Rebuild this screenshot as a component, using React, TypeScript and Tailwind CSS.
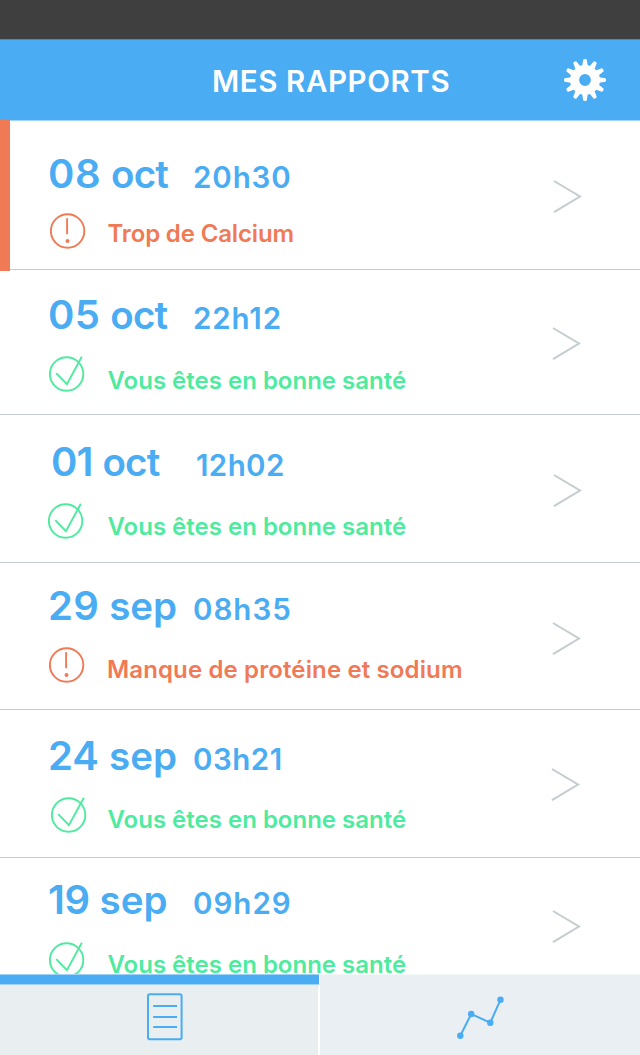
type Report = {
  day: string;
  month: string;
  time: string;
  message: string;
  alert: boolean;
  row: string;
  dateLine: string;
  dayText: string;
  monthText: string;
  timeText: string;
  statusLine: string;
  messageText: string;
  chevron: string;
};

const reports: Report[] = [
  {
    day: "08", month: "oct", time: "20h30", message: "Trop de Calcium", alert: true,
    row: "h-[149px] pt-[33px]", dateLine: "pl-[48px]", dayText: "tracking-[0.5px]", monthText: "tracking-[-0.8px]", timeText: "tracking-[0.9px]",
    statusLine: "mt-[18.5px] pl-[49.5px]", messageText: "ml-[22px] mt-[9px] tracking-[-0.15px]", chevron: "mt-[26px] mr-[58px]",
  },
  {
    day: "05", month: "oct", time: "22h12", message: "Vous êtes en bonne santé", alert: false,
    row: "h-[145px] pt-[25px]", dateLine: "pl-[48px]", dayText: "tracking-[0.3px]", monthText: "tracking-[-0.8px]", timeText: "tracking-[0.9px]",
    statusLine: "mt-[20.5px] pl-[48.5px]", messageText: "ml-[23px] mt-[13px] tracking-[0px]", chevron: "mt-[32px] mr-[59px]",
  },
  {
    day: "01", month: "oct", time: "12h02", message: "Vous êtes en bonne santé", alert: false,
    row: "h-[148px] pt-[27px]", dateLine: "pl-[51px]", dayText: "tracking-[-1px]", monthText: "tracking-[-0.8px]", timeText: "tracking-[0.4px]",
    statusLine: "mt-[20.5px] pl-[47.5px]", messageText: "ml-[24px] mt-[12px] tracking-[0px]", chevron: "mt-[32px] mr-[58px]",
  },
  {
    day: "29", month: "sep", time: "08h35", message: "Manque de protéine et sodium", alert: true,
    row: "h-[147px] pt-[23px]", dateLine: "pl-[48px]", dayText: "tracking-[0.3px]", monthText: "tracking-[0px]", timeText: "tracking-[1px]",
    statusLine: "mt-[20.5px] pl-[48.5px]", messageText: "ml-[22.5px] mt-[11px] tracking-[0.13px]", chevron: "mt-[36px] mr-[59px]",
  },
  {
    day: "24", month: "sep", time: "03h21", message: "Vous êtes en bonne santé", alert: false,
    row: "h-[148px] pt-[26px]", dateLine: "pl-[48px]", dayText: "tracking-[0px]", monthText: "tracking-[0px]", timeText: "tracking-[0.5px]",
    statusLine: "mt-[20.5px] pl-[50.5px]", messageText: "ml-[21px] mt-[11px] tracking-[0px]", chevron: "mt-[32px] mr-[60px]",
  },
  {
    day: "19", month: "sep", time: "09h29", message: "Vous êtes en bonne santé", alert: false,
    row: "h-[148px] pt-[22px]", dateLine: "pl-[48px]", dayText: "tracking-[-0.5px]", monthText: "tracking-[0px]", timeText: "tracking-[1px]",
    statusLine: "mt-[21.5px] pl-[48.5px]", messageText: "ml-[23px] mt-[11px] tracking-[0px]", chevron: "mt-[30px] mr-[59px]",
  },
];

function Gear() {
  const teeth = Array.from({ length: 12 }, (_, i) => i * 30);
  return (
    <svg width="42" height="42" viewBox="-21 -21 42 42" fill="#fff">
      <path fillRule="evenodd" d="M0-15a15 15 0 1 0 0 30a15 15 0 1 0 0-30zM0-5.9a5.9 5.9 0 1 1 0 11.8a5.9 5.9 0 1 1 0-11.8z" />
      {teeth.map((a) => (
        <path key={a} transform={`rotate(${a})`} d="M-2.8-14L-1.8-20.3Q-1.7-21 0-21Q1.7-21 1.8-20.3L2.8-14z" />
      ))}
    </svg>
  );
}

function StatusIcon({ alert }: { alert: boolean }) {
  return alert ? (
    <svg width="36" height="36" viewBox="0 0 36 36" fill="none" stroke="#f07a56" strokeWidth="1.9" className="shrink-0">
      <circle cx="17.6" cy="18" r="16.7" />
      <path d="M17.1 5.2V21.2" />
      <circle cx="17.5" cy="28" r="2" fill="#f07a56" stroke="none" />
    </svg>
  ) : (
    <svg width="36" height="36" viewBox="0 0 36 36" fill="none" stroke="#4eeb9f" strokeWidth="1.9" className="shrink-0">
      <circle cx="17.6" cy="18" r="16.7" />
      <path d="M7.2 17.2L17.9 28.2L32.8 0.8" />
    </svg>
  );
}

function ReportRow({ r }: { r: Report }) {
  return (
    <li className={`flex shrink-0 items-start justify-between border-b border-[#c3cccf] ${r.row}`}>
      <div>
        <div className={`flex h-10 items-baseline leading-10 text-[#4aacf2] ${r.dateLine}`}>
          <span className="w-[145px] whitespace-nowrap text-[40px] font-semibold">
            <span className={r.dayText}>{r.day}</span>{" "}
            <span className={`text-[38.5px] ${r.monthText}`}>{r.month}</span>
          </span>
          <span className={`whitespace-nowrap text-[29.5px] font-semibold ${r.timeText}`}>{r.time}</span>
        </div>
        <div className={`flex h-9 items-start ${r.statusLine}`}>
          <StatusIcon alert={r.alert} />
          <span className={`whitespace-nowrap text-[24px] leading-6 font-semibold ${r.alert ? "text-[#f07a56]" : "text-[#4eeb9f]"} ${r.messageText}`}>
            {r.message}
          </span>
        </div>
      </div>
      <svg width="29" height="34" viewBox="0 0 29 34" fill="none" stroke="#c3cccf" strokeWidth="2" className={`shrink-0 ${r.chevron}`}>
        <path d="M1 1L27 16.5L1 32.2" />
      </svg>
    </li>
  );
}

export default function App() {
  return (
    <div className="flex h-[1055px] w-[640px] flex-col overflow-hidden bg-white font-['Inter',sans-serif]">
      <div className="h-[39px] shrink-0 bg-[#3f3f3f]" />
      <header className="grid h-[82px] shrink-0 grid-cols-[212px_1fr_76px] items-center border-t border-b border-t-[#448cbf] border-b-[#a4d5f8] bg-[#4aacf2]">
        <h1 className="col-start-2 mt-[2px] whitespace-nowrap text-[29.5px] leading-8 font-semibold tracking-[0.6px] text-white">MES RAPPORTS</h1>
        <button aria-label="Paramètres" className="-mt-px">
          <Gear />
        </button>
      </header>
      <main className="relative h-[853px] shrink-0">
        <div className="absolute top-[-1px] left-0 h-[151px] w-[10px] bg-[#f07a56]" />
        <ul className="flex h-full flex-col overflow-hidden">
          {reports.map((r) => (
            <ReportRow key={r.day + r.month} r={r} />
          ))}
        </ul>
      </main>
      <nav className="grid h-[81px] shrink-0 grid-cols-[318px_320px] gap-0.5 bg-white">
        <button aria-label="Rapports" className="flex flex-col items-start bg-[#e9eff1]">
          <span className="h-[11px] w-[319px] shrink-0 border-y border-[#9fd2f8] bg-[#4aacf2]" />
          <svg width="36" height="48" viewBox="0 0 36 48" fill="none" stroke="#4aacf2" strokeWidth="2" className="mt-2 ml-[147px]">
            <rect x="1" y="1.2" width="33.6" height="45" rx="1.8" />
            <path d="M6.2 13H30M6.2 24H30M6.2 34H30" />
          </svg>
        </button>
        <button aria-label="Évolution" className="flex items-start justify-center border-t border-[#f4f7f8] bg-[#e9eff2] pt-[21px]">
          <svg width="48" height="44" viewBox="0 0 48 44" fill="#4aacf2" stroke="#4aacf2" strokeWidth="2">
            <path fill="none" d="M4.3 39.7L15.2 18L34.3 26.7L44.5 3.7" />
            <g stroke="none">
              <circle cx="4.3" cy="39.7" r="3.2" />
              <circle cx="15.2" cy="18" r="3.2" />
              <circle cx="34.3" cy="26.7" r="3.2" />
              <circle cx="44.5" cy="3.7" r="3.2" />
            </g>
          </svg>
        </button>
      </nav>
    </div>
  );
}
